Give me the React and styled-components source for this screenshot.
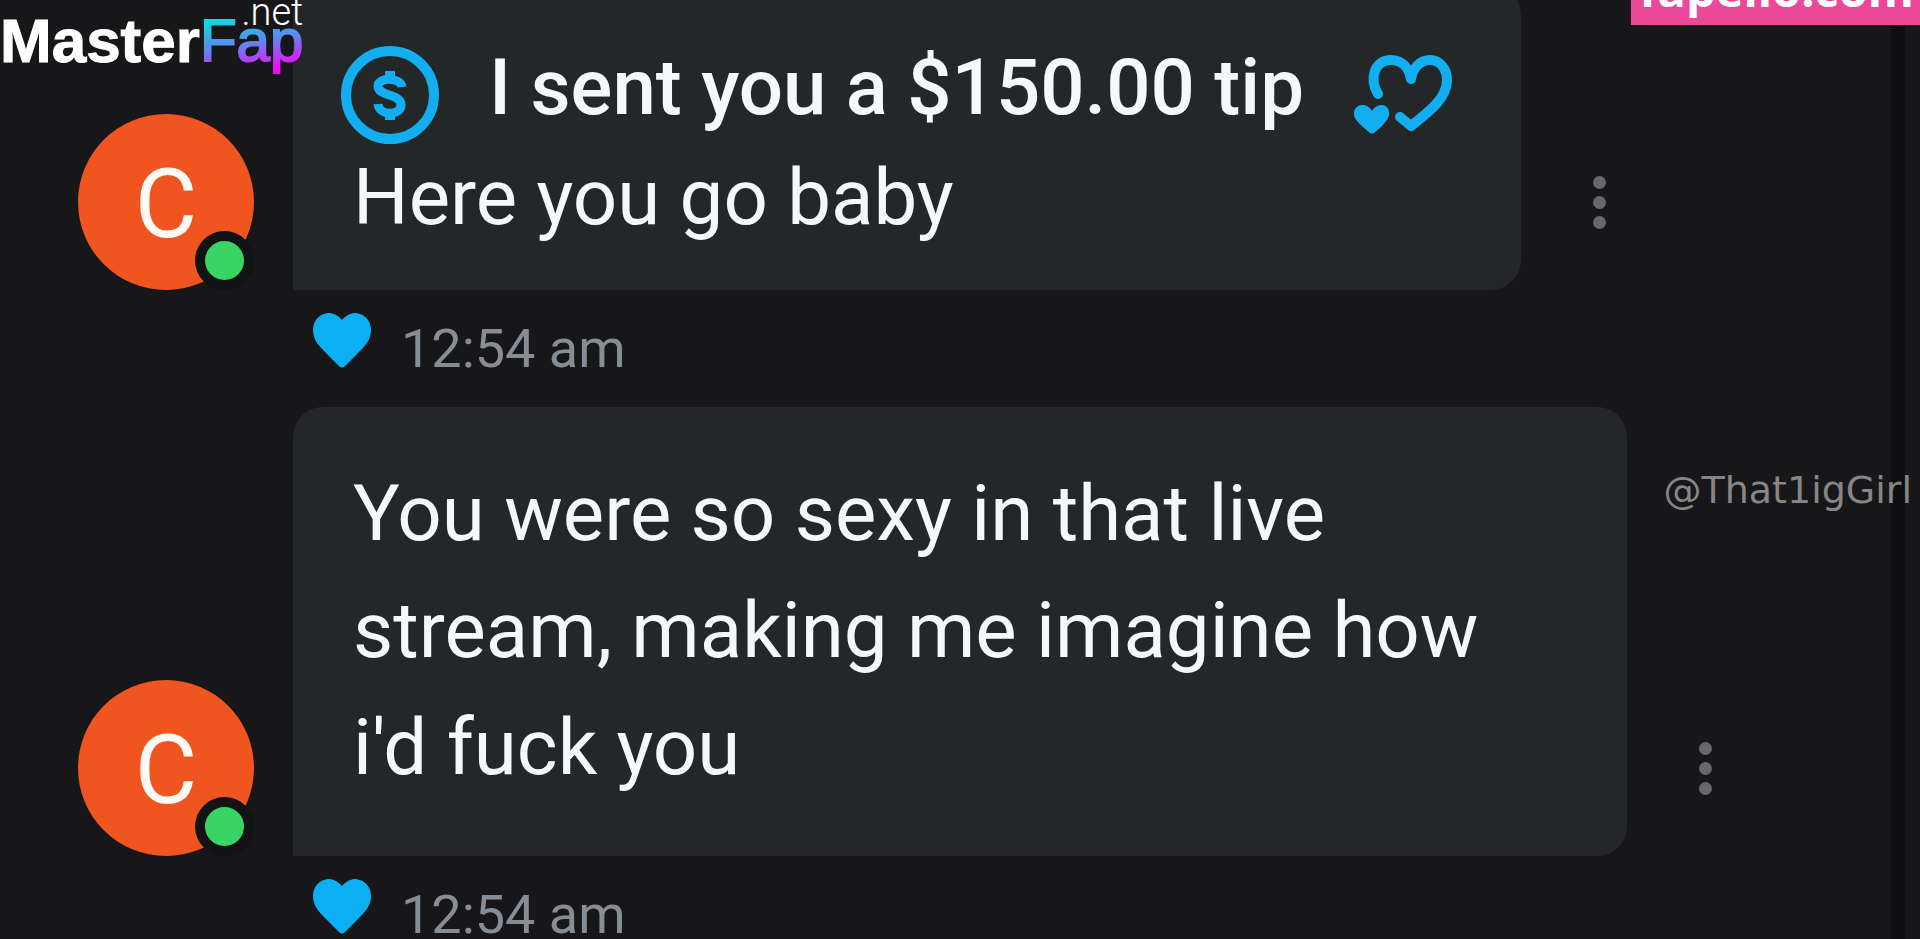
import React from "react";
import styled, { createGlobalStyle } from "styled-components";

// css App
const GlobalStyle = createGlobalStyle`
  * {
    box-sizing: border-box;
  }
  body {
    margin: 0;
    background-color: #171719;
  }
`;

const Page = styled.div`
  position: relative;
  height: 100vh;
  overflow: hidden;
  background-color: #171719;
  color: #f5f8fa;
  font-family: Roboto, sans-serif;
`;

const Edge = styled.div`
  position: absolute;
  top: 0;
  bottom: 0;
  right: 15px;
  width: 14px;
  background-color: #0e0e10;
`;

// css marcas por cima da conversa
const Logo = styled.div`
  position: absolute;
  top: 0;
  left: 0;
  display: flex;
  align-items: flex-start;
  font-family: "Liberation Sans", Arial, sans-serif;
  line-height: 82px;
`;

const LogoMaster = styled.span`
  font-size: 62px;
  font-weight: 700;
  color: #ffffff;
  -webkit-text-stroke: 1px #ffffff;
`;

const LogoFap = styled.span`
  font-size: 60px;
  background: linear-gradient(170deg, #00e5d8 20%, #5a8bf0 50%, #ff00ff 85%);
  background-clip: text;
  color: transparent;
  -webkit-text-stroke: 2px transparent;
`;

const LogoNet = styled.span`
  position: absolute;
  top: 0;
  right: 0;
  font-family: Roboto, sans-serif;
  font-size: 38px;
  font-weight: 300;
  line-height: 24px;
  color: #ffffff;
`;

const Site = styled.div`
  position: absolute;
  top: 0;
  right: 0;
  display: flex;
  align-items: flex-end;
  height: 25px;
  padding: 0 6px 0 8px;
  background-color: #ec4899;
  color: #ffffff;
  font-family: "Open Sans", sans-serif;
  font-size: 47px;
  font-weight: 700;
  line-height: 72px;
  overflow: hidden;
`;

const Handle = styled.div`
  position: absolute;
  top: 466px;
  right: 8px;
  color: #868687;
  font-family: "DejaVu Sans", sans-serif;
  font-size: 38px;
  line-height: 48px;
`;

// css mensagens
const Messages = styled.main`
  display: flex;
  flex-direction: column;
  padding-left: 78px;
  margin-top: -14px;
`;

const Message = styled.article`
  display: grid;
  grid-template-columns: 176px minmax(0, auto) 1fr;
  column-gap: 39px;
`;

const Avatar = styled.div`
  position: relative;
  align-self: end;
  display: flex;
  align-items: center;
  justify-content: center;
  width: 176px;
  height: 176px;
  padding-top: 4px;
  border-radius: 50%;
  background-color: #f05520;
  color: #fffaf5;
  font-size: 96px;
  line-height: 96px;
`;

const Online = styled.span`
  position: absolute;
  right: 0;
  bottom: 0;
  width: 59px;
  height: 59px;
  border: 10px solid #111314;
  border-radius: 50%;
  background-color: #39d466;
`;

const Bubble = styled.div`
  width: ${(props) => props.$width};
  max-width: 100%;
  padding: ${(props) => props.$padding};
  border-radius: 30px 30px 30px 0;
  background-color: #232728;
`;

const Tip = styled.div`
  display: flex;
  align-items: flex-start;
  height: 93px;
  margin-left: -12px;

  svg {
    flex-shrink: 0;
  }
`;

const TipText = styled.strong`
  margin: 0 50px;
  font-size: 78px;
  font-weight: 500;
  line-height: 84px;
  white-space: nowrap;
`;

const Text = styled.p`
  margin: 0;
  font-size: 78px;
  line-height: 117px;
`;

const MenuButton = styled.button`
  align-self: end;
  justify-self: start;
  display: flex;
  flex-direction: column;
  align-items: center;
  justify-content: center;
  gap: 7px;
  width: 78px;
  height: 176px;
  padding: 0;
  border: none;
  background: none;
`;

const Dot = styled.span`
  width: 13px;
  height: 13px;
  border-radius: 50%;
  background-color: #65686c;
`;

const Info = styled.div`
  grid-column: 2 / 4;
  display: flex;
  height: 117px;
  padding: 23px 0 0 20px;
`;

const LikeButton = styled.button`
  width: 58px;
  height: 56px;
  margin-right: 30px;
  padding: 0;
  border: none;
  background: none;
`;

const Time = styled.time`
  padding-top: 4px;
  color: #878d94;
  font-size: 54px;
  line-height: 64px;
`;

// ICONES

const HeartIcon = () => (
  <svg width="58" height="56" viewBox="0 0 58 56" fill="#0bb0f4" display="block">
    <path d="M29 7C24 1 19 0 15 0 6 1 0 8 0 17c0 10 6 16 14 24l12 12c2 2 4 2 6 0l12-12c8-8 14-14 14-24C58 8 52 1 43 0c-4 0-9 1-14 7z" />
  </svg>
);

const DollarIcon = () => (
  <svg width="98" height="98" viewBox="0 0 98 98" fill="none" stroke="#12aef0">
    <circle cx="49" cy="49" r="44" strokeWidth="10" />
    <path d="M61 41C60 31 37 31 37 40c0 11 23 7 23 19 0 11-22 11-23-1" strokeWidth="9" />
    <path d="M49 25v9M49 64v10" strokeWidth="10" />
  </svg>
);

const HeartsIcon = () => (
  <svg width="98" height="98" viewBox="0 -9 98 98">
    <path
      d="M24 39C15 24 20 5 37 5c11 0 18 8 20 19C59 13 66 5 76 5c10 0 17 9 17 20 0 18-17 31-36 46L46 62"
      fill="none"
      stroke="#12aef0"
      strokeWidth="10"
      strokeLinecap="round"
      strokeLinejoin="round"
    />
    <path d="M18 56C21 51 25 50 28 50c5 0 8 5 7 10-1 6-9 13-15 18-1 1-3 1-4 0C9 72 1 66 0 60c-1-5 3-10 8-10 4 0 7 1 10 6z" fill="#12aef0" />
  </svg>
);

// COMPONENTE MENSAGEM

const ChatMessage = ({ width, padding, children }) => (
  <Message>
    <Avatar>
      C
      <Online />
    </Avatar>
    <Bubble $width={width} $padding={padding}>{children}</Bubble>
    <MenuButton aria-label="Message menu">
      <Dot />
      <Dot />
      <Dot />
    </MenuButton>
    <Info>
      <LikeButton aria-label="Like">
        <HeartIcon />
      </LikeButton>
      <Time>12:54 am</Time>
    </Info>
  </Message>
);

// COMPONENTE PRINCIPAL APP

export default function App() {
  return (
    <Page>
      <GlobalStyle />
      <Edge />
      <Messages>
        <ChatMessage width="1228px" padding="60px 60px 34px 60px">
          <Tip>
            <DollarIcon />
            <TipText>I sent you a $150.00 tip</TipText>
            <HeartsIcon />
          </Tip>
          <Text>Here you go baby</Text>
        </ChatMessage>
        <ChatMessage width="1334px" padding="48px 60px 50px 60px">
          <Text>You were so sexy in that live stream, making me imagine how i'd fuck you</Text>
        </ChatMessage>
      </Messages>
      <Logo>
        <LogoMaster>Master</LogoMaster>
        <LogoFap>Fap</LogoFap>
        <LogoNet>.net</LogoNet>
      </Logo>
      <Site>fapello.com</Site>
      <Handle>@That1igGirl</Handle>
    </Page>
  );
}
